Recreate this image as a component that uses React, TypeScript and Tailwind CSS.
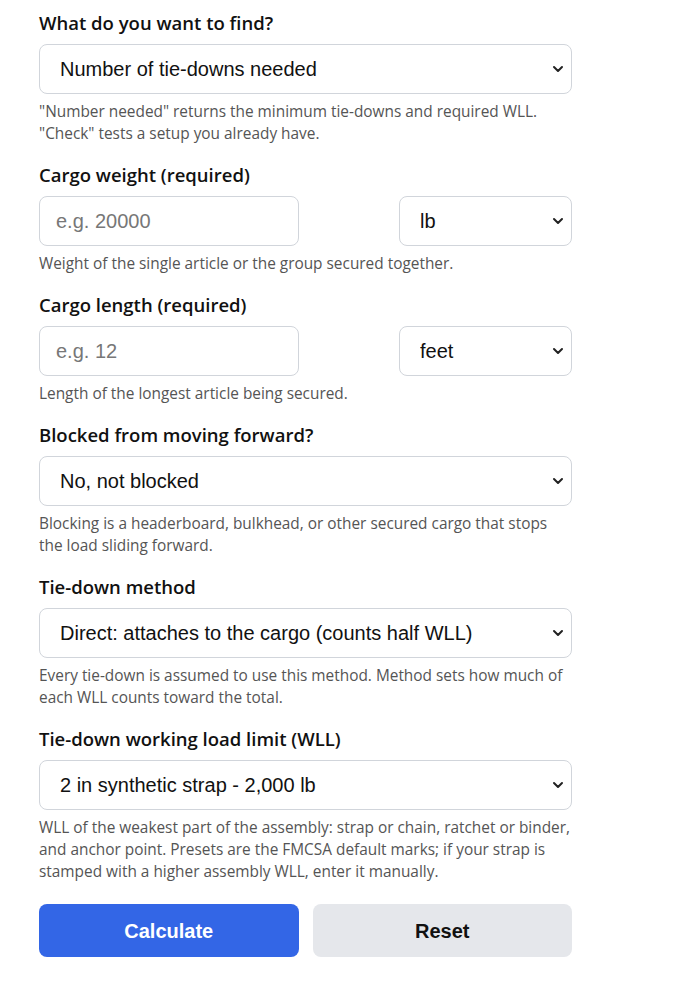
import type { ReactNode } from 'react'

const labelFont = "font-['Open_Sans',sans-serif]"
const controlFont = "font-['Liberation_Sans',Arial,sans-serif]"

function Chevron() {
  return (
    <svg
      className="pointer-events-none absolute right-[8px] top-1/2 -translate-y-1/2"
      width="12"
      height="8"
      viewBox="0 0 12 8"
      fill="none"
    >
      <path d="M2 2l4 4 4-4" stroke="#222" strokeWidth="2" strokeLinecap="round" strokeLinejoin="round" />
    </svg>
  )
}

function Select({ options, className = '' }: { options: string[]; className?: string }) {
  return (
    <div className={`relative ${className}`}>
      <select
        className={`${controlFont} h-[50px] w-full appearance-none rounded-[8px] border border-[#d1d5db] bg-white pl-[20px] pr-8 text-[20px] text-[#111] outline-none`}
      >
        {options.map((o) => (
          <option key={o}>{o}</option>
        ))}
      </select>
      <Chevron />
    </div>
  )
}

function Field({ label, help, children }: { label: string; help: ReactNode; children: ReactNode }) {
  return (
    <div className="flex flex-col">
      <label className={`${labelFont} mb-[9px] text-[18.5px] font-semibold leading-[24px] text-[#111]`}>{label}</label>
      {children}
      <p className={`${labelFont} mt-[7px] text-[15.4px] leading-[22px] text-[#555]`}>{help}</p>
    </div>
  )
}

function NumberWithUnit({ placeholder, units }: { placeholder: string; units: string[] }) {
  return (
    <div className="flex items-center justify-between">
      <input
        type="text"
        placeholder={placeholder}
        className={`${controlFont} h-[50px] w-[260px] rounded-[8px] border border-[#d1d5db] bg-white px-[16px] text-[20px] text-[#111] outline-none placeholder:text-[#777]`}
      />
      <Select options={units} className="w-[173px]" />
    </div>
  )
}

export default function App() {
  return (
    <div className="min-h-screen bg-white">
      <form className="ml-[39px] flex w-[533px] flex-col gap-[18px] pt-[11px]">
        <Field
          label="What do you want to find?"
          help={
            <>
              "Number needed" returns the minimum tie-downs and required WLL.
              <br />
              "Check" tests a setup you already have.
            </>
          }
        >
          <Select options={['Number of tie-downs needed', 'Check my tie-downs']} />
        </Field>

        <Field label="Cargo weight (required)" help="Weight of the single article or the group secured together.">
          <NumberWithUnit placeholder="e.g. 20000" units={['lb', 'kg']} />
        </Field>

        <Field label="Cargo length (required)" help="Length of the longest article being secured.">
          <NumberWithUnit placeholder="e.g. 12" units={['feet', 'meters']} />
        </Field>

        <Field
          label="Blocked from moving forward?"
          help="Blocking is a headerboard, bulkhead, or other secured cargo that stops the load sliding forward."
        >
          <Select options={['No, not blocked', 'Yes, blocked']} />
        </Field>

        <Field
          label="Tie-down method"
          help="Every tie-down is assumed to use this method. Method sets how much of each WLL counts toward the total."
        >
          <Select options={['Direct: attaches to the cargo (counts half WLL)', 'Indirect: passes over the cargo']} />
        </Field>

        <Field
          label="Tie-down working load limit (WLL)"
          help="WLL of the weakest part of the assembly: strap or chain, ratchet or binder, and anchor point. Presets are the FMCSA default marks; if your strap is stamped with a higher assembly WLL, enter it manually."
        >
          <Select options={['2 in synthetic strap - 2,000 lb', '4 in synthetic strap - 5,400 lb']} />
        </Field>

        <div className="mt-[3px] grid grid-cols-2 gap-[14px]">
          <button
            type="button"
            className={`${controlFont} h-[53px] rounded-[8px] bg-[#3366e6] text-[20px] font-bold text-white`}
          >
            Calculate
          </button>
          <button
            type="button"
            className={`${controlFont} h-[53px] rounded-[8px] bg-[#e5e7eb] text-[20px] font-bold text-[#111]`}
          >
            Reset
          </button>
        </div>
      </form>
    </div>
  )
}
